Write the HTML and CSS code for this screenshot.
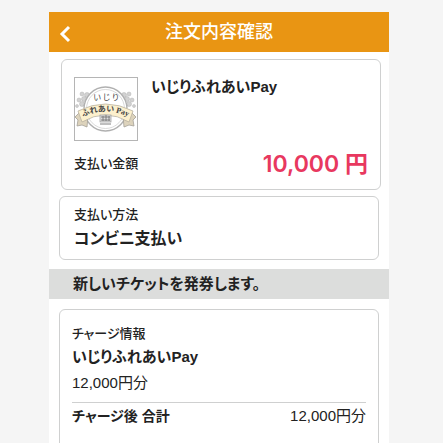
FILE: index.html
```html
<!DOCTYPE html>
<html lang="ja">
<head>
    <meta charset="UTF-8">
    <meta name="viewport" content="width=device-width, initial-scale=1.0">
    <title>注文内容確認</title>
    <link rel="stylesheet" href="styles.css">
</head>
<body>

    <div class="screen">
        <header class="app-bar">
            <button class="back-btn" type="button" aria-label="戻る">
                <svg viewBox="0 0 12 18" fill="none" stroke="currentColor" stroke-width="3">
                    <path d="M10 2 L3 9 L10 16"></path>
                </svg>
            </button>
            <h1>注文内容確認</h1>
        </header>

        <main>
            <section class="card order-card">
                <div class="order-item">
                    <svg class="order-logo" viewBox="0 0 64 64" role="img" aria-label="いじりふれあいPay">
                        <rect x="0.5" y="0.5" width="63" height="63" fill="#fff" stroke="#b5b5b5"></rect>
                        <g fill="#d2d2d2" stroke="#b2b2b2" stroke-width="0.5">
                            <circle cx="13" cy="18" r="2.5"></circle>
                            <circle cx="8" cy="17" r="2"></circle>
                            <circle cx="10" cy="22" r="2.5"></circle>
                            <circle cx="5" cy="23" r="2"></circle>
                            <circle cx="8" cy="27" r="2.5"></circle>
                            <circle cx="3" cy="29" r="1.5"></circle>
                            <circle cx="50" cy="18" r="2.5"></circle>
                            <circle cx="55" cy="17" r="2"></circle>
                            <circle cx="53" cy="22" r="2.5"></circle>
                            <circle cx="58" cy="23" r="2"></circle>
                            <circle cx="55" cy="27" r="2.5"></circle>
                            <circle cx="60" cy="29" r="1.5"></circle>
                        </g>
                        <ellipse cx="31.5" cy="32" rx="21.5" ry="22" fill="#fff" stroke="#b0b0b0" stroke-width="1.4"></ellipse>
                        <ellipse cx="31.5" cy="32" rx="19" ry="19.5" fill="none" stroke="#cacaca" stroke-width="0.7"></ellipse>
                        <path d="M5 36 L1 40 L4 43 L3 49 L8 48 L13 50 L14 39 Z M58 36 L62 40 L59 43 L60 49 L55 48 L50 50 L49 39 Z" fill="#ddd3bc" stroke="#a5a198" stroke-width="0.8"></path>
                        <path d="M4 34 Q31.5 20 59 34 L55 45 Q31.5 31 8 45 Z" fill="#fcf0cd" stroke="#b9b2a2" stroke-width="0.8"></path>
                        <path id="ribbon" d="M6 41 Q31.5 28 57 41" fill="none"></path>
                        <text class="logo-top" x="32" y="23" text-anchor="middle">い じ り</text>
                        <text class="logo-ribbon" text-anchor="middle"><textPath href="#ribbon" startOffset="50%">ふれあい Pay</textPath></text>
                        <rect x="26" y="38" width="11" height="7" fill="#ddd" stroke="#999" stroke-width="0.7"></rect>
                        <path d="M27 40 H36 M29 39 V44 M32 38 V44 M35 39 V44 M27 43 H36" stroke="#777" stroke-width="0.9" fill="none"></path>
                        <path d="M26 47 H37" stroke="#aaa" stroke-width="1.5"></path>
                    </svg>
                    <h2 class="name">いじりふれあいPay</h2>
                </div>
                <div class="order-total">
                    <span class="label">支払い金額</span>
                    <span class="amount">10,000 円</span>
                </div>
            </section>

            <section class="card method-card">
                <p class="label">支払い方法</p>
                <p class="method">コンビニ支払い</p>
            </section>

            <p class="notice">新しいチケットを発券します。</p>

            <section class="card charge-card">
                <p class="label">チャージ情報</p>
                <h2 class="name">いじりふれあいPay</h2>
                <p class="points">12,000円分</p>
                <div class="charge-total">
                    <span class="total-label">チャージ後 合計</span>
                    <span class="points">12,000円分</span>
                </div>
            </section>
        </main>
    </div>

</body>
</html>
```
FILE: styles.css
```css
:root {
    --page-bg: #f5f5f5;
    --accent: #e99513;
    --price: #e8385f;
    --border: #cfd0d0;
    --band: #dcdddc;
    --text: #222;
}

*, *::before, *::after {
    box-sizing: border-box;
    margin: 0;
    padding: 0;
}

body {
    display: flex;
    height: 100vh;
    overflow: hidden;
    padding: 12px 54px 0 49px;
    font-family: "Liberation Sans", "Noto Sans CJK JP", sans-serif;
    font-feature-settings: "palt";
    background: var(--page-bg);
    color: var(--text);
}

.screen {
    flex: 1;
    background: #fff;
}

.app-bar {
    display: grid;
    grid-template-columns: 32px 1fr 32px;
    align-items: center;
    height: 40px;
    background: var(--accent);
    color: #fff;
}

.app-bar h1 {
    font-size: 18px;
    font-weight: 500;
    line-height: 26px;
    text-align: center;
}

.back-btn {
    display: flex;
    justify-content: center;
    padding: 4px 0 0;
    border: 0;
    background: none;
    color: inherit;
    cursor: pointer;
}

.back-btn svg {
    width: 12px;
    height: 18px;
}

.card {
    margin: 0 10px;
    border: 1px solid var(--border);
    border-radius: 6px;
    background: #fff;
}

.label {
    font-size: 13px;
    font-weight: 500;
    line-height: 20px;
}

.name {
    font-size: 15px;
    font-weight: 700;
    line-height: 24px;
}

.order-card {
    margin: 7px 8px 6px 12px;
    padding: 17px 12px 9px 12px;
}

.order-item {
    display: flex;
    gap: 13px;
}

.order-item .name {
    margin-top: -2px;
}

.order-logo {
    width: 64px;
    height: 64px;
}

.logo-top,
.logo-ribbon {
    font-family: "Liberation Serif", "Noto Sans CJK JP", serif;
    font-size: 8px;
    fill: #444;
}

.logo-ribbon {
    font-weight: 700;
}

.order-total {
    display: flex;
    justify-content: space-between;
    align-items: center;
    margin-top: 7px;
}

.amount {
    font-family: Inter, "Noto Sans CJK JP", sans-serif;
    font-size: 23px;
    font-weight: 600;
    line-height: 32px;
    color: var(--price);
}

.method-card {
    padding: 8px 14px 6px;
}

.method {
    font-size: 16px;
    font-weight: 700;
    line-height: 28px;
}

.notice {
    margin: 9px 0 10px;
    padding: 0 24px;
    font-size: 15px;
    font-weight: 700;
    line-height: 30px;
    background: var(--band);
}

.charge-card {
    padding: 14px 12px 24px;
}

.points {
    font-size: 15px;
    line-height: 26px;
}

.charge-card .name {
    line-height: 26px;
}

.charge-total {
    display: flex;
    justify-content: space-between;
    margin-top: 6px;
    border-top: 1px solid var(--border);
}

.total-label {
    font-size: 14px;
    font-weight: 700;
    line-height: 26px;
}
```
